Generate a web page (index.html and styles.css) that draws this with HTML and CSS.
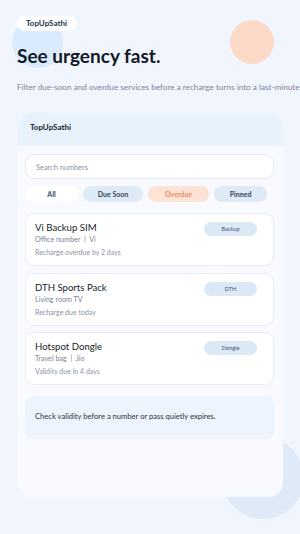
FILE: index.html
```html
<!DOCTYPE html>
<html lang="en">

<head>
    <meta charset="UTF-8">
    <meta name="viewport" content="width=device-width, initial-scale=1.0">
    <title>TopUpSathi</title>
    <link rel="stylesheet" href="styles.css">
</head>

<body>
    <div class="blob blob-blue"></div>
    <div class="blob blob-peach"></div>
    <div class="blob blob-bottom"></div>

    <div class="hero">
        <div class="brand-pill">TopUpSathi</div>
        <h1 class="headline">See urgency fast.</h1>
        <p class="lead">Filter due-soon and overdue services before a recharge turns into a last-minute</p>
    </div>

    <div class="phone">
        <div class="phone-head">TopUpSathi</div>
        <div class="phone-body">
            <div class="search">Search numbers</div>
            <div class="chips">
                <span class="chip chip-all">All</span>
                <span class="chip">Due Soon</span>
                <span class="chip chip-hot">Overdue</span>
                <span class="chip chip-pin">Pinned</span>
            </div>
            <div class="list">
                <div class="item">
                    <div class="item-text">
                        <div class="item-title">Vi Backup SIM</div>
                        <div class="item-sub">Office number &nbsp;|&nbsp; Vi</div>
                        <div class="item-due">Recharge overdue by 2 days</div>
                    </div>
                    <span class="tag">Backup</span>
                </div>
                <div class="item">
                    <div class="item-text">
                        <div class="item-title">DTH Sports Pack</div>
                        <div class="item-sub">Living room TV</div>
                        <div class="item-due">Recharge due today</div>
                    </div>
                    <span class="tag">DTH</span>
                </div>
                <div class="item">
                    <div class="item-text">
                        <div class="item-title">Hotspot Dongle</div>
                        <div class="item-sub">Travel bag &nbsp;|&nbsp; Jio</div>
                        <div class="item-due">Validity due in 4 days</div>
                    </div>
                    <span class="tag">Dongle</span>
                </div>
            </div>
            <div class="note">Check validity before a number or pass quietly expires.</div>
        </div>
    </div>
</body>

</html>
```

FILE: styles.css
```css
* {
    margin: 0;
    padding: 0;
    box-sizing: border-box;
}

body {
    width: 300px;
    height: 534px;
    background-color: #f1f6fe;
    font-family: Lato, "Noto Sans", sans-serif;
    position: relative;
    overflow: hidden;
}

/* decorative circles */
.blob {
    position: absolute;
    border-radius: 50%;
    z-index: 0;
}

.blob-blue {
    left: 12px;
    top: 17px;
    width: 51px;
    height: 51px;
    background-color: #d9ebfd;
}

.blob-peach {
    left: 230px;
    top: 20px;
    width: 44px;
    height: 44px;
    background-color: #fdd9c7;
}

.blob-bottom {
    left: 222px;
    top: 437px;
    width: 82px;
    height: 82px;
    background-color: #dfeaf8;
}

.hero {
    position: relative;
    z-index: 1;
    padding: 16px 0 0 17px;
}

.brand-pill {
    width: fit-content;
    height: 15px;
    line-height: 15px;
    padding: 0 10px 0 9px;
    background-color: #ffffff;
    border-radius: 8px;
    font-size: 8px;
    font-weight: 700;
    color: #1d3552;
}

.headline {
    margin-top: 12px;
    font-size: 19px;
    line-height: 26px;
    font-weight: 700;
    color: #121826;
}

.lead {
    margin-top: 12px;
    font-size: 8.2px;
    line-height: 12px;
    color: #7a8496;
    white-space: nowrap;
}

.phone {
    position: relative;
    z-index: 1;
    margin: 20px 0 0 18px;
    width: 265px;
    height: 384px;
    background-color: #f8faff;
    border-radius: 14px;
    overflow: hidden;
}

.phone-head {
    height: 33px;
    line-height: 28px;
    padding-left: 12px;
    background-color: #e8f2fd;
    font-size: 8px;
    font-weight: 700;
    color: #161c28;
}

.phone-body {
    padding: 8px 9px 0 7px;
}

.search {
    height: 25px;
    line-height: 25px;
    padding-left: 10px;
    background-color: #ffffff;
    border: 1px solid #e2eaf5;
    border-radius: 9px;
    font-size: 7.4px;
    color: #8a93a4;
}

.chips {
    display: flex;
    gap: 5px;
    margin-top: 7px;
}

.chip {
    width: 60px;
    height: 16px;
    line-height: 17px;
    text-align: center;
    border-radius: 8px;
    background-color: #deebf6;
    font-size: 7px;
    font-weight: 700;
    color: #34445a;
}

.chip-all {
    width: 53px;
    background-color: #ffffff;
}

.chip-hot {
    width: 61px;
    background-color: #fde2d6;
    color: #ea8a62;
}

.chip-pin {
    width: 53px;
}

.list {
    display: flex;
    flex-direction: column;
    gap: 6.5px;
    margin-top: 11px;
}

.item {
    display: flex;
    justify-content: space-between;
    align-items: flex-start;
    height: 53px;
    padding: 7px 16px 0 9px;
    background-color: #ffffff;
    border: 1px solid #e5edf7;
    border-radius: 9px;
}

.item-title {
    font-size: 9.6px;
    line-height: 13px;
    font-weight: 400;
    color: #161c28;
}

.item-sub {
    font-size: 7.2px;
    line-height: 11px;
    color: #7b8597;
}

.item-due {
    margin-top: 2px;
    font-size: 7px;
    line-height: 11px;
    color: #8a93a4;
}

.tag {
    width: 53px;
    height: 14px;
    line-height: 14px;
    margin-top: 1px;
    text-align: center;
    border-radius: 7px;
    background-color: #dbe9f6;
    font-size: 5.6px;
    color: #44546a;
}

.note {
    margin-top: 11px;
    height: 43px;
    line-height: 40px;
    padding-left: 10px;
    background-color: #edf4fd;
    border-radius: 9px;
    font-size: 7.6px;
    color: #283142;
}
```
